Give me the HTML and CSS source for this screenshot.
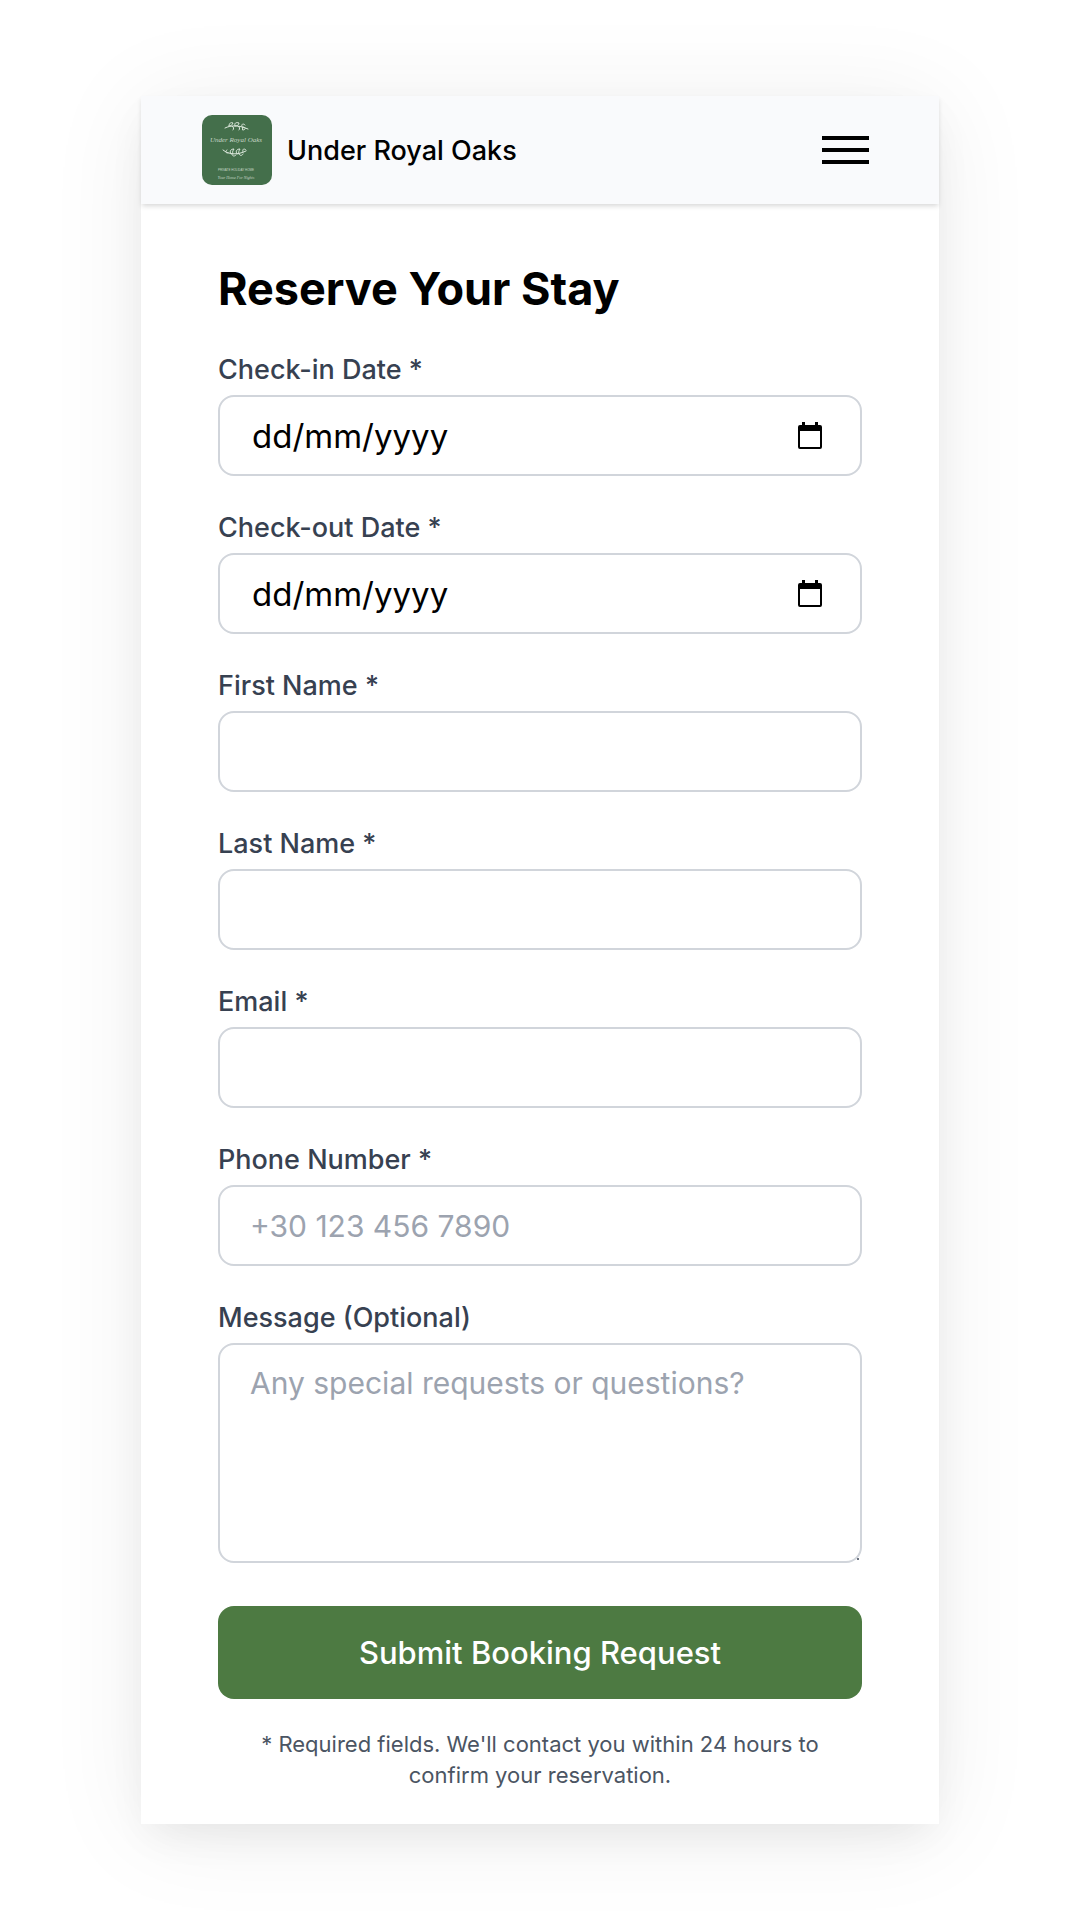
FILE: index.html
```html
<!DOCTYPE html>
<html lang="en-GB">
<head>
<meta charset="utf-8">
<meta name="viewport" content="width=device-width, initial-scale=1">
<title>Reserve Your Stay – Under Royal Oaks</title>
<link rel="stylesheet" href="styles.css">
</head>
<body>
<div class="card">
  <header class="header">
    <a class="brand" href="#">
      <svg class="brand-logo" viewBox="0 0 70 70" aria-hidden="true">
        <rect width="70" height="70" rx="10" fill="#446f4b"/>
        <g fill="none" stroke="#dce8dc" stroke-width="1" stroke-linecap="round">
          <path d="M23 13c6-3 14-3 23 1M27 11c0-3 2-4 4-3-1 2-2 3-4 3M30 11c2 1 2 3 1 4M33 11c-1-3 1-4 4-3 0 2-2 3-4 3M36 11c2 1 2 3 1 4M40 12c-1-3 1-4 3-2M41 12c3 0 3 3 0 3z"/>
          <path d="M21 35c6 5 15 5 23 1M26 38c-3 0-3-2-1-3M29 39c-2-3 0-5 3-5-1 2-2 2-1 5M30 39c0 2 2 3 4 1M35 39c-2-3 0-5 3-5-1 2-2 3-1 5M37 39c1 2 3 2 4 0M41 37c-1-3 1-4 3-2"/>
        </g>
        <text class="logo-script" x="34" y="27" text-anchor="middle">Under Royal Oaks</text>
        <text class="logo-small" x="34" y="56" text-anchor="middle">PRIVATE HOLIDAY HOME</text>
        <text class="logo-tag" x="34" y="64" text-anchor="middle">Your Home For Nights</text>
      </svg>
      <span>Under Royal Oaks</span>
    </a>
    <button class="menu" type="button" aria-label="Open menu">
      <span class="menu-bar"></span><span class="menu-bar"></span><span class="menu-bar"></span>
    </button>
  </header>
  <main class="content">
    <h1 class="title">Reserve Your Stay</h1>
    <form class="form">
      <div class="field">
        <label class="label" for="checkin">Check-in Date *</label>
        <div class="control date">
          <input class="date-input" id="checkin" type="text" inputmode="numeric" placeholder="dd/mm/yyyy" required>
          <button class="date-button" type="button" aria-label="Choose check-in date">
            <svg class="date-icon" viewBox="0 0 26 28" aria-hidden="true"><path fill="#000" fill-rule="evenodd" d="M5 0h3v3h10V0h3v3h2a2 2 0 0 1 2 2v20a2 2 0 0 1-2 2H3a2 2 0 0 1-2-2V5a2 2 0 0 1 2-2h2zM3 9v16h20V9z"/></svg>
          </button>
        </div>
      </div>
      <div class="field">
        <label class="label" for="checkout">Check-out Date *</label>
        <div class="control date">
          <input class="date-input" id="checkout" type="text" inputmode="numeric" placeholder="dd/mm/yyyy" required>
          <button class="date-button" type="button" aria-label="Choose check-out date">
            <svg class="date-icon" viewBox="0 0 26 28" aria-hidden="true"><path fill="#000" fill-rule="evenodd" d="M5 0h3v3h10V0h3v3h2a2 2 0 0 1 2 2v20a2 2 0 0 1-2 2H3a2 2 0 0 1-2-2V5a2 2 0 0 1 2-2h2zM3 9v16h20V9z"/></svg>
          </button>
        </div>
      </div>
      <div class="field">
        <label class="label" for="first">First Name *</label>
        <input class="control" id="first" type="text" required>
      </div>
      <div class="field">
        <label class="label" for="last">Last Name *</label>
        <input class="control" id="last" type="text" required>
      </div>
      <div class="field">
        <label class="label" for="email">Email *</label>
        <input class="control" id="email" type="email" required>
      </div>
      <div class="field">
        <label class="label" for="phone">Phone Number *</label>
        <input class="control" id="phone" type="tel" placeholder="+30 123 456 7890" required>
      </div>
      <div class="field">
        <label class="label" for="message">Message (Optional)</label>
        <textarea class="control message" id="message" placeholder="Any special requests or questions?"></textarea>
      </div>
      <button class="submit" type="submit">Submit Booking Request</button>
      <p class="note">* Required fields. We'll contact you within 24 hours to confirm your reservation.</p>
    </form>
  </main>
</div>
</body>
</html>
```
FILE: styles.css
```css
* { box-sizing: border-box; }
body {
  margin: 0;
  padding: 96px 24px;
  background: #fff;
  color: #000;
  font-family: Inter, "Open Sans", sans-serif;
}
.card {
  max-width: 798px;
  margin: 0 auto;
  background: #fff;
  box-shadow: 0 8px 96px rgba(0, 0, 0, .07), 0 16px 40px -8px rgba(0, 0, 0, .07);
}
.header {
  display: flex;
  align-items: center;
  justify-content: space-between;
  padding: 19px 70px 19px 61px;
  background: #f9fafc;
  box-shadow: 0 3px 5px -1px rgba(0, 0, 0, .16);
}
.brand {
  display: flex;
  align-items: center;
  gap: 15px;
  color: #000;
  font-size: 27px;
  font-weight: 500;
  text-decoration: none;
}
.brand-logo { width: 70px; height: 70px; }
.logo-script { font: italic 7px "Liberation Serif", serif; fill: #c4d5c5; }
.logo-small { font: 3px "Liberation Sans", sans-serif; fill: #c4d5c5; }
.logo-tag { font: italic 4px "Liberation Serif", serif; fill: #c4d5c5; }
.menu {
  display: flex;
  flex-direction: column;
  gap: 8px;
  padding: 0;
  border: 0;
  background: none;
}
.menu-bar { width: 47px; height: 4px; background: #000; }
.content { padding: 56px 77px 33px; }
.title {
  margin: 0 0 32px;
  font-size: 45px;
  line-height: 57px;
  font-weight: 700;
}
.form { display: flex; flex-direction: column; }
.field {
  display: flex;
  flex-direction: column;
  gap: 4px;
  margin-bottom: 31px;
}
.label {
  color: #374151;
  font-size: 27px;
  line-height: 42px;
  font-weight: 500;
}
.control {
  width: 100%;
  height: 81px;
  padding: 0 30px;
  border: 2px solid #d1d5db;
  border-radius: 16px;
  background: #fff;
  color: #000;
  font: 400 30px/44px Inter, "Open Sans", sans-serif;
}
.control::placeholder { color: #9ca3af; opacity: 1; }
.date { display: flex; align-items: center; padding-right: 37px; font-size: 33px; }
.date-input {
  flex: 1;
  min-width: 0;
  padding: 0 2px;
  border: 0;
  background: none;
  font: inherit;
}
.date-input::placeholder { color: #000; opacity: 1; }
.date-button { display: flex; padding: 0; border: 0; background: none; }
.date-icon { width: 26px; height: 28px; }
.message { display: block; height: 220px; padding: 16px 30px; resize: vertical; }
.message::-webkit-resizer {
  background: linear-gradient(#6b7280, #6b7280) 12px 12px / 2px 2px no-repeat;
}
.submit {
  height: 93px;
  margin-top: 12px;
  border: 0;
  border-radius: 16px;
  background: #4d7a42;
  color: #fff;
  font: 500 31px/44px Inter, "Open Sans", sans-serif;
}
.note {
  margin: 30px 0 0;
  padding: 0 24px;
  color: #4b5563;
  font-size: 22px;
  line-height: 31px;
  text-align: center;
}
```
